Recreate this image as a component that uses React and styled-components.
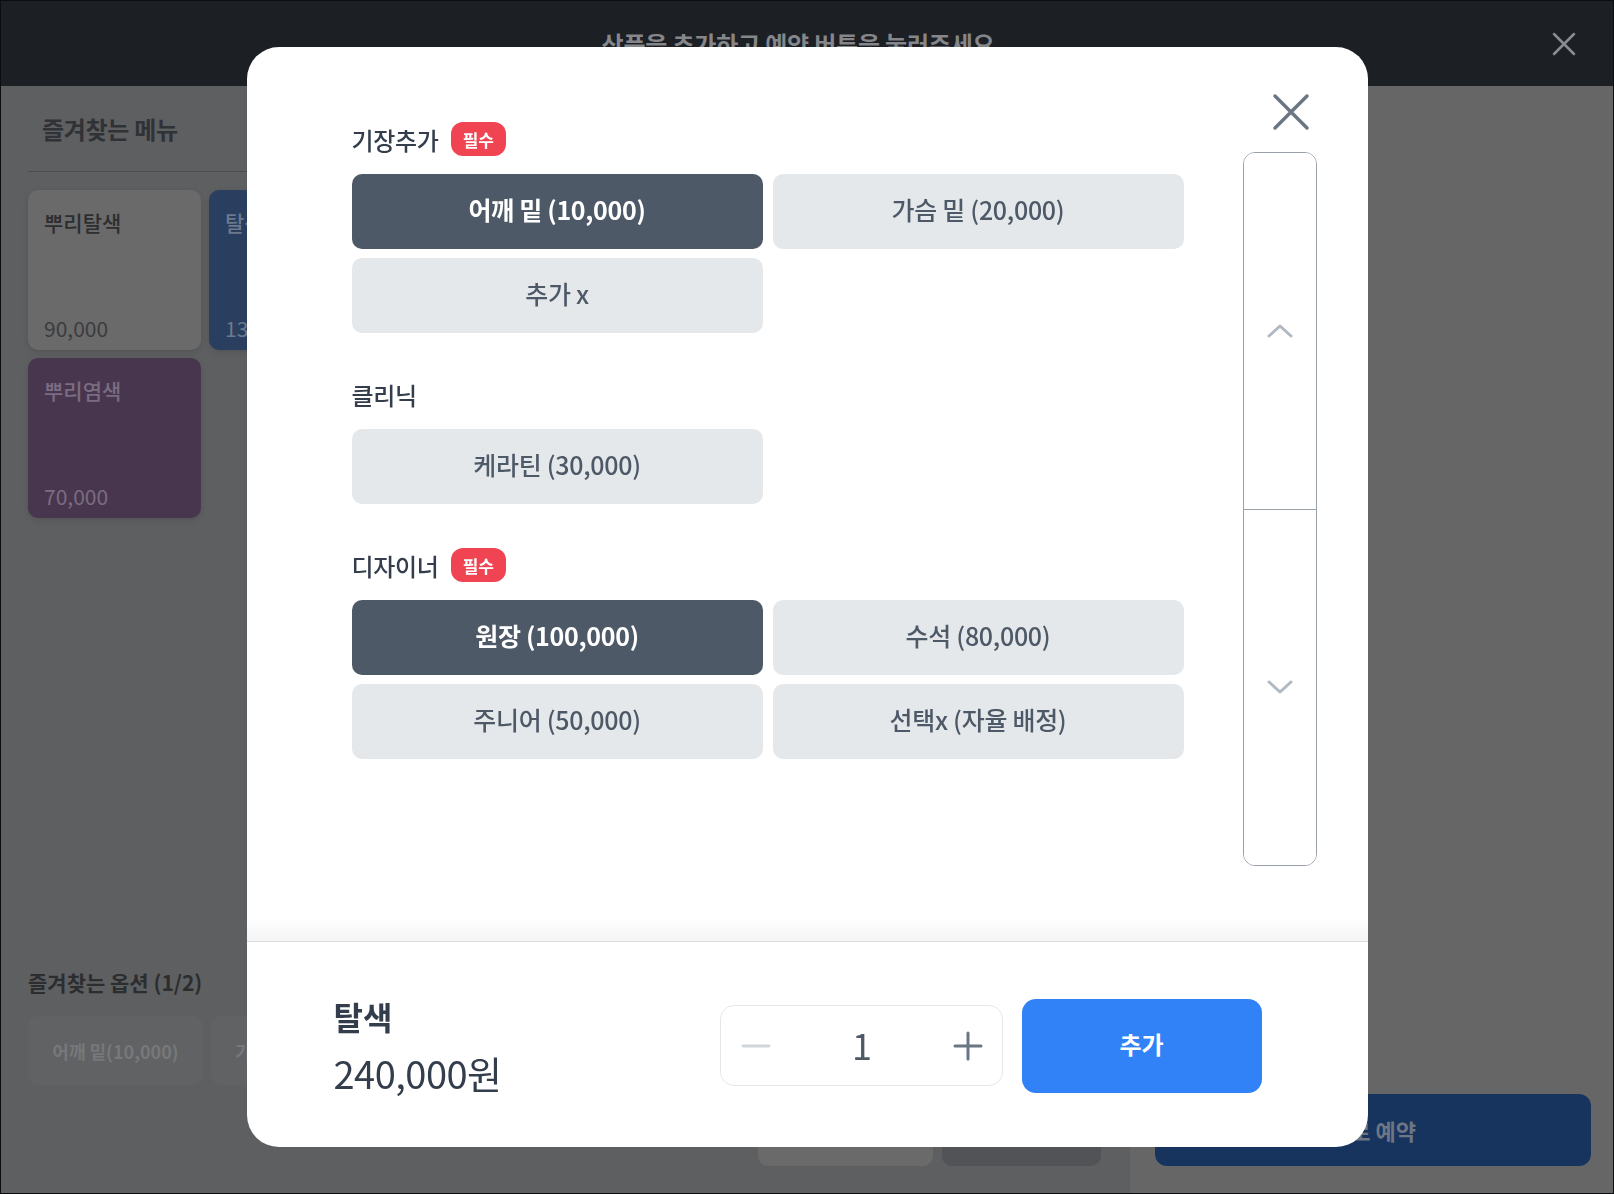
import React, { useState } from 'react'
import styled, { createGlobalStyle } from 'styled-components'

const GlobalStyle = createGlobalStyle`
  *, *::before, *::after { box-sizing: border-box; }
  html, body { margin: 0; padding: 0; height: 100%; }
  body {
    font-family: "Noto Sans CJK KR", "Noto Sans", sans-serif;
    overflow: hidden;
  }
  button { font-family: inherit; cursor: pointer; }
`

// the page behind the dialog, already in its dimmed colours
const tones = {
  white: { bg: '#6a6a6b', title: '#2d2e30', price: '#3b3c3e' },
  blue: { bg: '#2a3f5f', title: '#6d7a8d', price: '#6d7a8d' },
  purple: { bg: '#48364e', title: '#7b6c81', price: '#7b6c81' }
}

const page = {
  Frame: styled.div`
    width: 100vw;
    height: 100vh;
    display: flex;
    flex-direction: column;
    border: 1px solid #0c0d0f;
    background: #5e5f61;
    overflow: hidden;
  `,
  TopBar: styled.header`
    flex: none;
    height: 85px;
    display: grid;
    grid-template-columns: 1fr auto 1fr;
    align-items: center;
    background: #1c1f24;
  `,
  Notice: styled.h1`
    grid-column: 2;
    margin: 0 18px 0 0;
    font-size: 24px;
    font-weight: 700;
    color: #84868a;
    letter-spacing: -0.2px;
  `,
  TopClose: styled.button`
    justify-self: end;
    margin-right: 36px;
    width: 26px;
    height: 26px;
    padding: 0;
    border: none;
    background: none;
    color: #8a8c90;
  `,
  Body: styled.div`
    flex: 1;
    min-height: 0;
    display: flex;
  `,
  Left: styled.section`
    width: 1129px;
    display: flex;
    flex-direction: column;
    padding: 0 29px 27px 27px;
  `,
  MenuTitle: styled.h2`
    height: 86px;
    margin: 0;
    padding-left: 14px;
    display: flex;
    align-items: center;
    font-size: 24px;
    font-weight: 600;
    color: #303236;
    letter-spacing: -0.3px;
    border-bottom: 1px solid #4c4d4f;
  `,
  CardGrid: styled.div`
    margin-top: 18px;
    display: grid;
    grid-template-columns: repeat(2, 173px);
    grid-auto-rows: 160px;
    gap: 8px;
  `,
  Card: styled.div`
    display: flex;
    flex-direction: column;
    justify-content: space-between;
    padding: 18px 16px 8px;
    border-radius: 10px;
    background: ${p => tones[p.$tone].bg};
    box-shadow: 0 2px 6px rgba(0, 0, 0, 0.12);
  `,
  CardName: styled.span`
    font-size: 21px;
    line-height: 28px;
    font-weight: 500;
    color: ${p => tones[p.$tone].title};
  `,
  CardPrice: styled.span`
    font-size: 21px;
    line-height: 28px;
    color: ${p => tones[p.$tone].price};
  `,
  Spacer: styled.div`
    flex: 1;
  `,
  OptionsTitle: styled.h3`
    margin: 0;
    font-size: 21px;
    line-height: 28px;
    font-weight: 700;
    color: #2c2d2f;
  `,
  ChipRow: styled.div`
    margin-top: 20px;
    display: flex;
    gap: 8px;
  `,
  Chip: styled.div`
    width: 175px;
    height: 69px;
    display: flex;
    align-items: center;
    justify-content: center;
    border-radius: 10px;
    background: #616264;
    font-size: 18px;
    font-weight: 600;
    color: #77787a;
  `,
  ActionRow: styled.div`
    margin-top: 9px;
    display: flex;
    justify-content: flex-end;
    gap: 9px;
  `,
  GhostAction: styled.button`
    width: ${p => p.$w}px;
    height: 72px;
    border: none;
    border-radius: 10px;
    background: ${p => (p.$dark ? '#525356' : '#6a6a6a')};
  `,
  Right: styled.aside`
    flex: 1;
    display: flex;
    flex-direction: column;
    justify-content: flex-end;
    padding: 0 22px 27px 25px;
    background: #666666;
  `,
  Reserve: styled.button`
    height: 72px;
    border: none;
    border-radius: 12px;
    background: #17345f;
    font-size: 22px;
    font-weight: 700;
    color: #6e7684;
  `
}

const ui = {
  Backdrop: styled.div`
    position: fixed;
    inset: 0;
    display: flex;
    align-items: center;
    justify-content: center;
    z-index: 10;
  `,
  Modal: styled.div`
    width: 1121px;
    height: 1100px;
    display: flex;
    flex-direction: column;
    background: #fff;
    border-radius: 32px;
    overflow: hidden;
  `,
  Content: styled.div`
    flex: 1;
    min-height: 0;
    display: flex;
    gap: 59px;
    padding: 0 51px 0 105px;
  `,
  Options: styled.div`
    width: 832px;
    padding-top: 75px;
    display: flex;
    flex-direction: column;
    gap: 44px;
  `,
  Section: styled.section`
    display: flex;
    flex-direction: column;
  `,
  LabelRow: styled.div`
    height: 34px;
    margin-bottom: 18px;
    display: flex;
    align-items: center;
    gap: 12px;
  `,
  Label: styled.h4`
    margin: 0;
    font-size: 24px;
    font-weight: 500;
    color: #333d4b;
    letter-spacing: -0.3px;
  `,
  Badge: styled.span`
    height: 34px;
    padding: 0 12px;
    display: inline-flex;
    align-items: center;
    border-radius: 12px;
    background: #f04452;
    font-size: 17px;
    font-weight: 700;
    color: #fff;
  `,
  Grid: styled.div`
    display: grid;
    grid-template-columns: 1fr 1fr;
    column-gap: 10px;
    row-gap: 9px;
  `,
  Choice: styled.button`
    height: 75px;
    padding: 0 0 5px;
    border: none;
    border-radius: 10px;
    background: ${p => (p.$active ? '#4e5968' : '#e5e8eb')};
    color: ${p => (p.$active ? '#fff' : '#4e5968')};
    font-size: 25px;
    font-weight: ${p => (p.$active ? 700 : 500)};
    letter-spacing: -0.3px;
  `,
  Side: styled.div`
    width: 74px;
    padding-top: 46px;
    display: flex;
    flex-direction: column;
  `,
  Close: styled.button`
    align-self: flex-end;
    margin-right: 7px;
    width: 38px;
    height: 38px;
    padding: 0;
    border: none;
    background: none;
    color: #6b7684;
  `,
  Scroller: styled.div`
    margin-top: 21px;
    height: 714px;
    display: flex;
    flex-direction: column;
    border: 1px solid #9aa1a9;
    border-radius: 12px;
    overflow: hidden;
  `,
  ScrollStep: styled.button`
    flex: 1;
    display: flex;
    align-items: center;
    justify-content: center;
    border: none;
    border-top: ${p => (p.$lower ? '1px solid #9aa1a9' : 'none')};
    background: #fff;
    color: #b0b8c1;
  `,
  Footer: styled.footer`
    position: relative;
    flex: none;
    height: 206px;
    display: flex;
    align-items: center;
    justify-content: space-between;
    padding: 2px 106px 0 87px;
    border-top: 1px solid #dadcdf;

    &::before {
      content: '';
      position: absolute;
      left: 0;
      right: 0;
      top: -25px;
      height: 24px;
      background: linear-gradient(to bottom, rgba(0, 0, 0, 0), rgba(0, 0, 0, 0.045));
    }
  `,
  Product: styled.div`
    display: flex;
    flex-direction: column;
  `,
  ProductName: styled.strong`
    font-size: 32px;
    line-height: 40px;
    font-weight: 700;
    color: #333d4b;
  `,
  Total: styled.span`
    margin-top: 14px;
    font-size: 38px;
    line-height: 46px;
    font-weight: 400;
    color: #333d4b;
    letter-spacing: -0.5px;
  `,
  Actions: styled.div`
    display: flex;
    align-items: center;
    gap: 19px;
  `,
  Counter: styled.div`
    width: 283px;
    height: 81px;
    display: flex;
    align-items: center;
    justify-content: space-between;
    padding: 0 18px 0 20px;
    border: 1px solid #e5e8eb;
    border-radius: 14px;
  `,
  Step: styled.button`
    width: 30px;
    height: 30px;
    padding: 0;
    border: none;
    background: none;
    color: ${p => (p.$muted ? '#d1d6db' : '#6b7684')};
  `,
  Qty: styled.span`
    padding-bottom: 4px;
    font-size: 36px;
    line-height: 1;
    color: #4e5968;
  `,
  Add: styled.button`
    width: 240px;
    height: 94px;
    padding: 0 0 4px;
    border: none;
    border-radius: 14px;
    background: #3182f6;
    font-size: 24px;
    font-weight: 600;
    color: #fff;
  `
}

const menus = [
  { name: '뿌리탈색', price: '90,000', tone: 'white' },
  { name: '탈색', price: '130,000', tone: 'blue' },
  { name: '뿌리염색', price: '70,000', tone: 'purple' }
]

const favoriteOptions = ['어깨 밑(10,000)', '가슴 밑(20,000)']

const sections = [
  {
    title: '기장추가',
    required: true,
    options: [
      { label: '어깨 밑 (10,000)', price: 10000 },
      { label: '가슴 밑 (20,000)', price: 20000 },
      { label: '추가 x', price: 0 }
    ]
  },
  {
    title: '클리닉',
    options: [{ label: '케라틴 (30,000)', price: 30000 }]
  },
  {
    title: '디자이너',
    required: true,
    options: [
      { label: '원장 (100,000)', price: 100000 },
      { label: '수석 (80,000)', price: 80000 },
      { label: '주니어 (50,000)', price: 50000 },
      { label: '선택x (자율 배정)', price: 0 }
    ]
  }
]

const BASE_PRICE = 130000

const XIcon = ({ size, stroke }) => (
  <svg width={size} height={size} viewBox={`0 0 ${size} ${size}`} fill='none'>
    <path
      d={`M3 3L${size - 3} ${size - 3}M${size - 3} 3L3 ${size - 3}`}
      stroke='currentColor'
      strokeWidth={stroke}
      strokeLinecap='round'
    />
  </svg>
)

const Chevron = ({ down }) => (
  <svg width='26' height='16' viewBox='0 0 26 16' fill='none'>
    <path
      d={down ? 'M2 3L13 13L24 3' : 'M2 13L13 3L24 13'}
      stroke='currentColor'
      strokeWidth='3'
      strokeLinecap='round'
      strokeLinejoin='round'
    />
  </svg>
)

function BackgroundPage() {
  return (
    <page.Body>
      <page.Left>
        <page.MenuTitle>즐겨찾는 메뉴</page.MenuTitle>
        <page.CardGrid>
          {menus.map(m => (
            <page.Card key={m.name} $tone={m.tone}>
              <page.CardName $tone={m.tone}>{m.name}</page.CardName>
              <page.CardPrice $tone={m.tone}>{m.price}</page.CardPrice>
            </page.Card>
          ))}
        </page.CardGrid>
        <page.Spacer />
        <page.OptionsTitle>즐겨찾는 옵션 (1/2)</page.OptionsTitle>
        <page.ChipRow>
          {favoriteOptions.map(o => <page.Chip key={o}>{o}</page.Chip>)}
        </page.ChipRow>
        <page.ActionRow>
          <page.GhostAction $w={175} aria-label='초기화' />
          <page.GhostAction $w={159} $dark aria-label='삭제' />
        </page.ActionRow>
      </page.Left>
      <page.Right>
        <page.Reserve>바로 예약</page.Reserve>
      </page.Right>
    </page.Body>
  )
}

function OptionDialog() {
  const [picked, setPicked] = useState([0, -1, 0])
  const [qty, setQty] = useState(1)

  const extra = sections.reduce((sum, s, i) => sum + (picked[i] >= 0 ? s.options[picked[i]].price : 0), 0)
  const total = (BASE_PRICE + extra) * qty

  const pick = (si, oi) => {
    setPicked(prev => prev.map((v, i) => (i === si ? (v === oi && !sections[si].required ? -1 : oi) : v)))
  }

  return (
    <ui.Backdrop>
      <ui.Modal>
        <ui.Content>
          <ui.Options>
            {sections.map((s, si) => (
              <ui.Section key={s.title}>
                <ui.LabelRow>
                  <ui.Label>{s.title}</ui.Label>
                  {s.required && <ui.Badge>필수</ui.Badge>}
                </ui.LabelRow>
                <ui.Grid>
                  {s.options.map((o, oi) => (
                    <ui.Choice key={o.label} $active={picked[si] === oi} onClick={() => pick(si, oi)}>
                      {o.label}
                    </ui.Choice>
                  ))}
                </ui.Grid>
              </ui.Section>
            ))}
          </ui.Options>
          <ui.Side>
            <ui.Close aria-label='닫기'>
              <XIcon size={38} stroke={3.5} />
            </ui.Close>
            <ui.Scroller>
              <ui.ScrollStep aria-label='위로'>
                <Chevron />
              </ui.ScrollStep>
              <ui.ScrollStep $lower aria-label='아래로'>
                <Chevron down />
              </ui.ScrollStep>
            </ui.Scroller>
          </ui.Side>
        </ui.Content>
        <ui.Footer>
          <ui.Product>
            <ui.ProductName>탈색</ui.ProductName>
            <ui.Total>{total.toLocaleString('ko-KR')}원</ui.Total>
          </ui.Product>
          <ui.Actions>
            <ui.Counter>
              <ui.Step $muted={qty <= 1} onClick={() => setQty(q => Math.max(1, q - 1))} aria-label='빼기'>
                <svg width='30' height='30' viewBox='0 0 30 30' fill='none'>
                  <path d='M2 15H28' stroke='currentColor' strokeWidth='3' strokeLinecap='round' />
                </svg>
              </ui.Step>
              <ui.Qty>{qty}</ui.Qty>
              <ui.Step onClick={() => setQty(q => q + 1)} aria-label='더하기'>
                <svg width='30' height='30' viewBox='0 0 30 30' fill='none'>
                  <path d='M2 15H28M15 2V28' stroke='currentColor' strokeWidth='3' strokeLinecap='round' />
                </svg>
              </ui.Step>
            </ui.Counter>
            <ui.Add>추가</ui.Add>
          </ui.Actions>
        </ui.Footer>
      </ui.Modal>
    </ui.Backdrop>
  )
}

export default function App() {
  return (
    <>
      <GlobalStyle />
      <page.Frame>
        <page.TopBar>
          <page.Notice>상품을 추가하고 예약 버튼을 눌러주세요</page.Notice>
          <page.TopClose aria-label='닫기'>
            <XIcon size={26} stroke={2.5} />
          </page.TopClose>
        </page.TopBar>
        <BackgroundPage />
      </page.Frame>
      <OptionDialog />
    </>
  )
}
